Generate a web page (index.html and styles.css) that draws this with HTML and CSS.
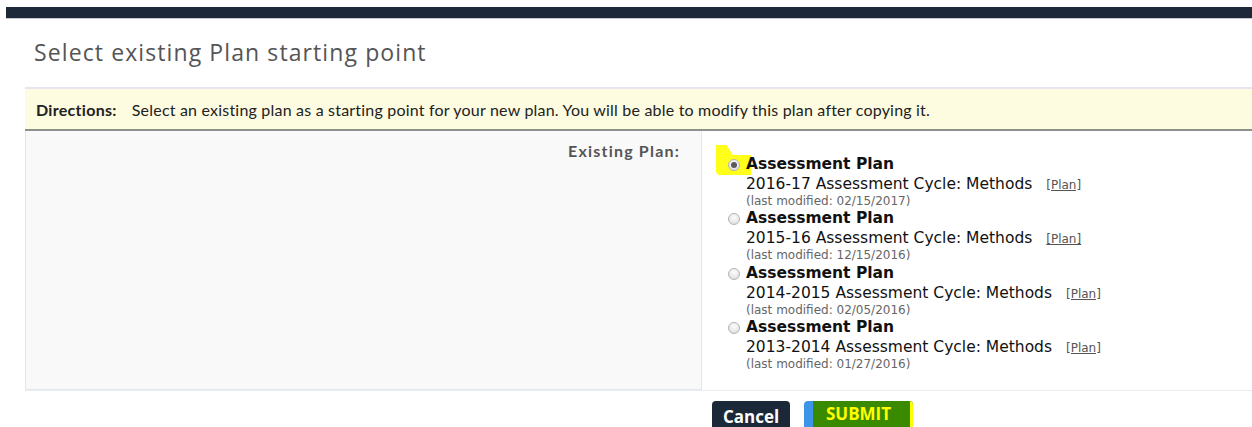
FILE: index.html
```html
<!DOCTYPE html>
<html lang="en">
<head>
<meta charset="utf-8">
<title>Select existing Plan starting point</title>
<link rel="stylesheet" href="styles.css">
</head>
<body>
<div class="topbar"></div>
<h1 class="page-title">Select existing Plan starting point</h1>
<div class="directions">
  <strong>Directions:</strong>
  <span>Select an existing plan as a starting point for your new plan. You will be able to modify this plan after copying it.</span>
</div>
<form class="plan-form">
  <div class="label-cell">Existing Plan:</div>
  <div class="options-cell">
    <label class="plan-option">
      <span class="marker"></span>
      <input type="radio" name="plan" checked>
      <span class="plan-text">
        <span class="plan-name">Assessment Plan</span>
        <span class="plan-cycle">2016-17 Assessment Cycle: Methods <a href="#" class="plan-link">[Plan]</a></span>
        <span class="plan-date">(last modified: 02/15/2017)</span>
      </span>
    </label>
    <label class="plan-option">
      <input type="radio" name="plan">
      <span class="plan-text">
        <span class="plan-name">Assessment Plan</span>
        <span class="plan-cycle">2015-16 Assessment Cycle: Methods <a href="#" class="plan-link">[Plan]</a></span>
        <span class="plan-date">(last modified: 12/15/2016)</span>
      </span>
    </label>
    <label class="plan-option">
      <input type="radio" name="plan">
      <span class="plan-text">
        <span class="plan-name">Assessment Plan</span>
        <span class="plan-cycle">2014-2015 Assessment Cycle: Methods <a href="#" class="plan-link">[Plan]</a></span>
        <span class="plan-date">(last modified: 02/05/2016)</span>
      </span>
    </label>
    <label class="plan-option">
      <input type="radio" name="plan">
      <span class="plan-text">
        <span class="plan-name">Assessment Plan</span>
        <span class="plan-cycle">2013-2014 Assessment Cycle: Methods <a href="#" class="plan-link">[Plan]</a></span>
        <span class="plan-date">(last modified: 01/27/2016)</span>
      </span>
    </label>
  </div>
</form>
<div class="actions">
  <button type="button" class="btn btn-cancel">Cancel</button>
  <button type="button" class="btn btn-submit"><span class="submit-face">SUBMIT</span></button>
</div>
</body>
</html>
```
FILE: styles.css
```css
html, body {
  margin: 0;
  padding: 0;
  background: #ffffff;
  overflow: hidden;
}

body {
  font-family: "Open Sans", "DejaVu Sans", sans-serif;
  color: #333;
}

.topbar {
  margin: 7px 0 0 6px;
  height: 11px;
  background: #1d2939;
  border-bottom: 1px solid #c3cad4;
}

.page-title {
  margin: 18px 0 0 34px;
  font-family: "Open Sans", sans-serif;
  font-weight: 400;
  font-size: 23px;
  letter-spacing: 1.1px;
  line-height: 30px;
  color: #555;
}

.directions {
  margin: 20px 0 0 25px;
  height: 40px;
  box-sizing: content-box;
  display: flex;
  align-items: center;
  gap: 15px;
  padding-left: 11px;
  background: #fdfbe0;
  border-top: 2px solid #e7e5ef;
  border-bottom: 2px solid #8f8f8c;
  font-family: "Lato", sans-serif;
  font-size: 16px;
  letter-spacing: 0.2px;
  color: #222;
}

.directions strong {
  font-weight: 700;
  letter-spacing: 0.3px;
}

.plan-form {
  margin: 0 0 0 25px;
  display: grid;
  grid-template-columns: 677px 1fr;
  border-bottom: 1px solid #e9ecf0;
  height: 259px;
}

.label-cell {
  background: #f9f9f9;
  border: 1px solid #e2e7ee;
  border-top: none;
  text-align: right;
  padding: 10px 21px 0 0;
  font-family: "Lato", sans-serif;
  font-weight: 700;
  font-size: 16px;
  letter-spacing: 1.2px;
  color: #555;
}

.options-cell {
  padding: 24px 0 0 26px;
}

.plan-option {
  position: relative;
  z-index: 0;
  display: flex;
  align-items: flex-start;
  margin-bottom: 1.33px;
  font-family: "DejaVu Sans", Verdana, sans-serif;
  color: #111;
}

.plan-option input {
  appearance: none;
  -webkit-appearance: none;
  position: relative;
  margin: 4px 6px 0 0;
  width: 12px;
  height: 12px;
  border-radius: 50%;
  border: 1px solid #b4b4b4;
  box-sizing: border-box;
  background: radial-gradient(circle at 50% 35%, #fdfdfd 0%, #e8e8e8 60%, #d4d4d4 100%);
}

.plan-option input:checked::after {
  content: "";
  position: absolute;
  left: 2px;
  top: 2px;
  width: 6px;
  height: 6px;
  border-radius: 50%;
  background: #5a5a5a;
}

/* highlighter stroke behind the selected radio */
.marker {
  position: absolute;
  z-index: -1;
  left: -12px;
  top: -10px;
  width: 35px;
  height: 30px;
  background: #ffff1a;
  clip-path: polygon(0 0, 30% 0, 48% 33%, 100% 33%, 100% 100%, 6% 100%, 0 90%);
}

.plan-text {
  display: flex;
  flex-direction: column;
}

.plan-name {
  font-weight: 700;
  font-size: 15.5px;
  line-height: 19px;
}

.plan-cycle {
  font-size: 15.5px;
  line-height: 20px;
}

.plan-link {
  margin-left: 9px;
  font-size: 12px;
  color: #555;
  text-decoration: underline;
}

.plan-date {
  font-size: 12px;
  line-height: 13px;
  color: #666;
}

.actions {
  display: flex;
  gap: 14px;
  padding: 10px 0 0 712px;
}

.btn {
  border: none;
  margin: 0;
  height: 30px;
  border-radius: 4px;
  font-family: "Open Sans", sans-serif;
  font-weight: 700;
  font-size: 17px;
  cursor: pointer;
}

.btn-cancel {
  width: 78px;
  padding: 0;
  background: #1b2838;
  color: #ffffff;
}

.btn-submit {
  display: flex;
  padding: 0 0 0 9px;
  width: 109px;
  background: #3d95e7;
  overflow: hidden;
}

.submit-face {
  flex: 1;
  background: #3a8a00;
  border-right: 3px solid #ffff00;
  color: #ffff00;
  line-height: 26px;
  text-align: center;
  padding-right: 6px;
}
```
